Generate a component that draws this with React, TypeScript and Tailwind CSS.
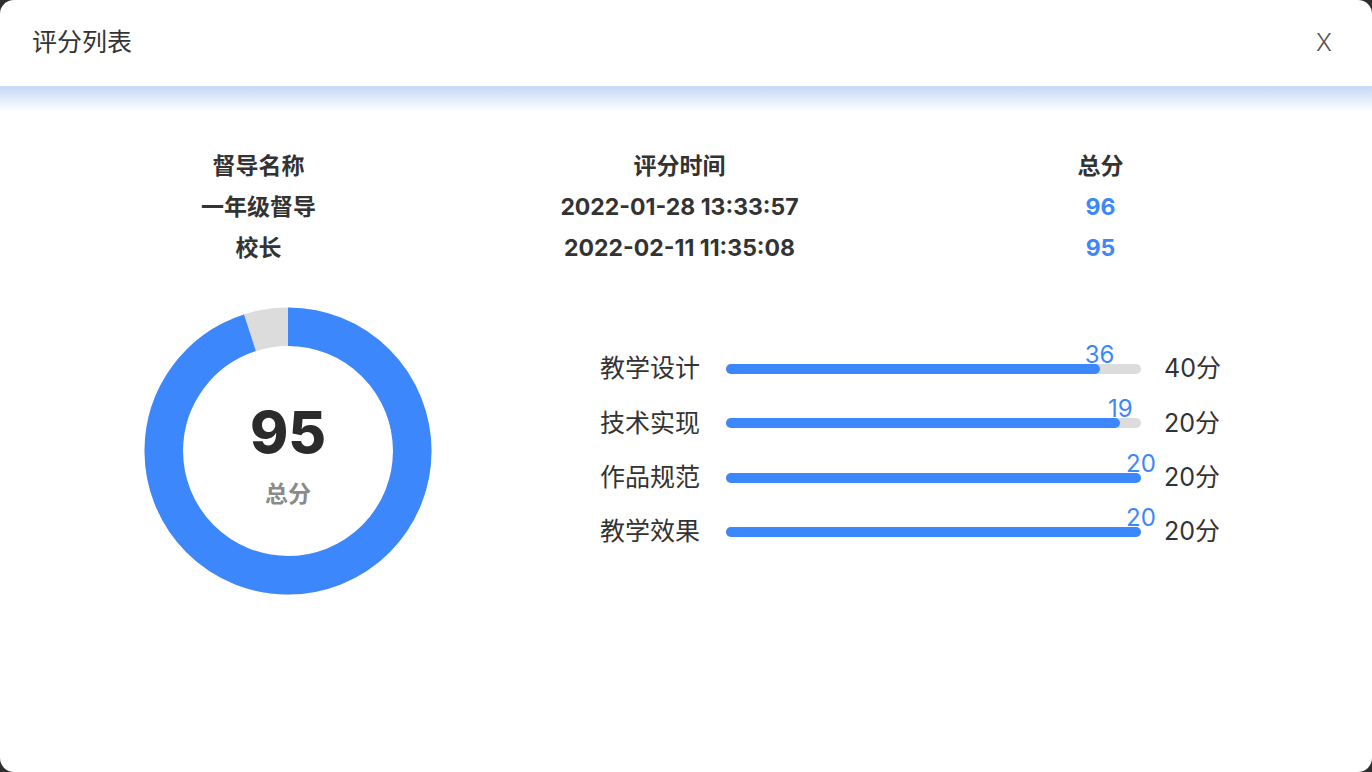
import React from "react";

const records = [
  { name: "一年级督导", time: "2022-01-28 13:33:57", score: 96 },
  { name: "校长", time: "2022-02-11 11:35:08", score: 95 },
];

const items = [
  { label: "教学设计", value: 36, max: 40 },
  { label: "技术实现", value: 19, max: 20 },
  { label: "作品规范", value: 20, max: 20 },
  { label: "教学效果", value: 20, max: 20 },
];

const font = { fontFamily: "Inter, 'Noto Sans CJK SC', sans-serif" };

function Donut({ value }: { value: number }) {
  const r = 124.25;
  const c = 2 * Math.PI * r;
  return (
    <div className="relative w-[288px] h-[288px] shrink-0">
      <svg width="288" height="288" viewBox="0 0 288 288">
        <circle cx="144" cy="144" r={r} fill="none" stroke="#dcdcdc" strokeWidth="38.5" />
        <circle
          cx="144"
          cy="144"
          r={r}
          fill="none"
          stroke="#3d87fc"
          strokeWidth="38.5"
          strokeDasharray={`${(c * value) / 100} ${c}`}
          transform="rotate(-90 144 144)"
        />
      </svg>
      <div className="absolute inset-0 flex flex-col items-center justify-center">
        <div className="text-[58px] font-extrabold leading-none text-[#2b2b2b] mt-[12px]">{value}</div>
        <div className="text-[23px] font-bold text-[#8a8a8a] mt-[16px]">总分</div>
      </div>
    </div>
  );
}

function Bar({ label, value, max }: { label: string; value: number; max: number }) {
  const pct = (value / max) * 100;
  return (
    <div className="flex items-center h-[54.3px]">
      <div className="w-[126px] text-[25px] text-[#333]">{label}</div>
      <div className="relative w-[415px] h-[10px] rounded-full bg-[#dcdcdc]">
        <div className="h-full rounded-full bg-[#3d87fc]" style={{ width: `${pct}%` }} />
        <div
          className="absolute bottom-[7px] -translate-x-1/2 text-[24px] leading-none text-[#3d87fc]"
          style={{ left: `${pct}%` }}
        >
          {value}
        </div>
      </div>
      <div className="ml-[23px] text-[25px] text-[#333]">{max}分</div>
    </div>
  );
}

export default function App() {
  return (
    <div className="w-[1372px] h-[772px] bg-[#2e2e2e]" style={font}>
      <div className="w-full h-full bg-white rounded-[14px] overflow-hidden flex flex-col">
        <div className="h-[86px] shrink-0 flex items-center justify-between pl-8 pr-[40px]">
          <div className="text-[25px] text-[#333]">评分列表</div>
          <div className="text-[24px] font-light text-[#555]">X</div>
        </div>
        <div className="h-[26px] shrink-0 bg-gradient-to-b from-[#c4d8f6] to-white" />

        <div className="ml-[48px] w-[1263px] mt-[34px] grid grid-cols-3 text-center text-[23px] font-bold text-[#333] leading-[41px]">
          <div>督导名称</div>
          <div>评分时间</div>
          <div>总分</div>
          {records.map((r) => (
            <React.Fragment key={r.time}>
              <div>{r.name}</div>
              <div>{r.time}</div>
              <div className="text-[#3d87fc]">{r.score}</div>
            </React.Fragment>
          ))}
        </div>

        <div className="flex items-start ml-[144px] mt-[38px]">
          <Donut value={95} />
          <div className="ml-[168px] mt-[35px] flex flex-col">
            {items.map((it) => (
              <Bar key={it.label} {...it} />
            ))}
          </div>
        </div>
      </div>
    </div>
  );
}
